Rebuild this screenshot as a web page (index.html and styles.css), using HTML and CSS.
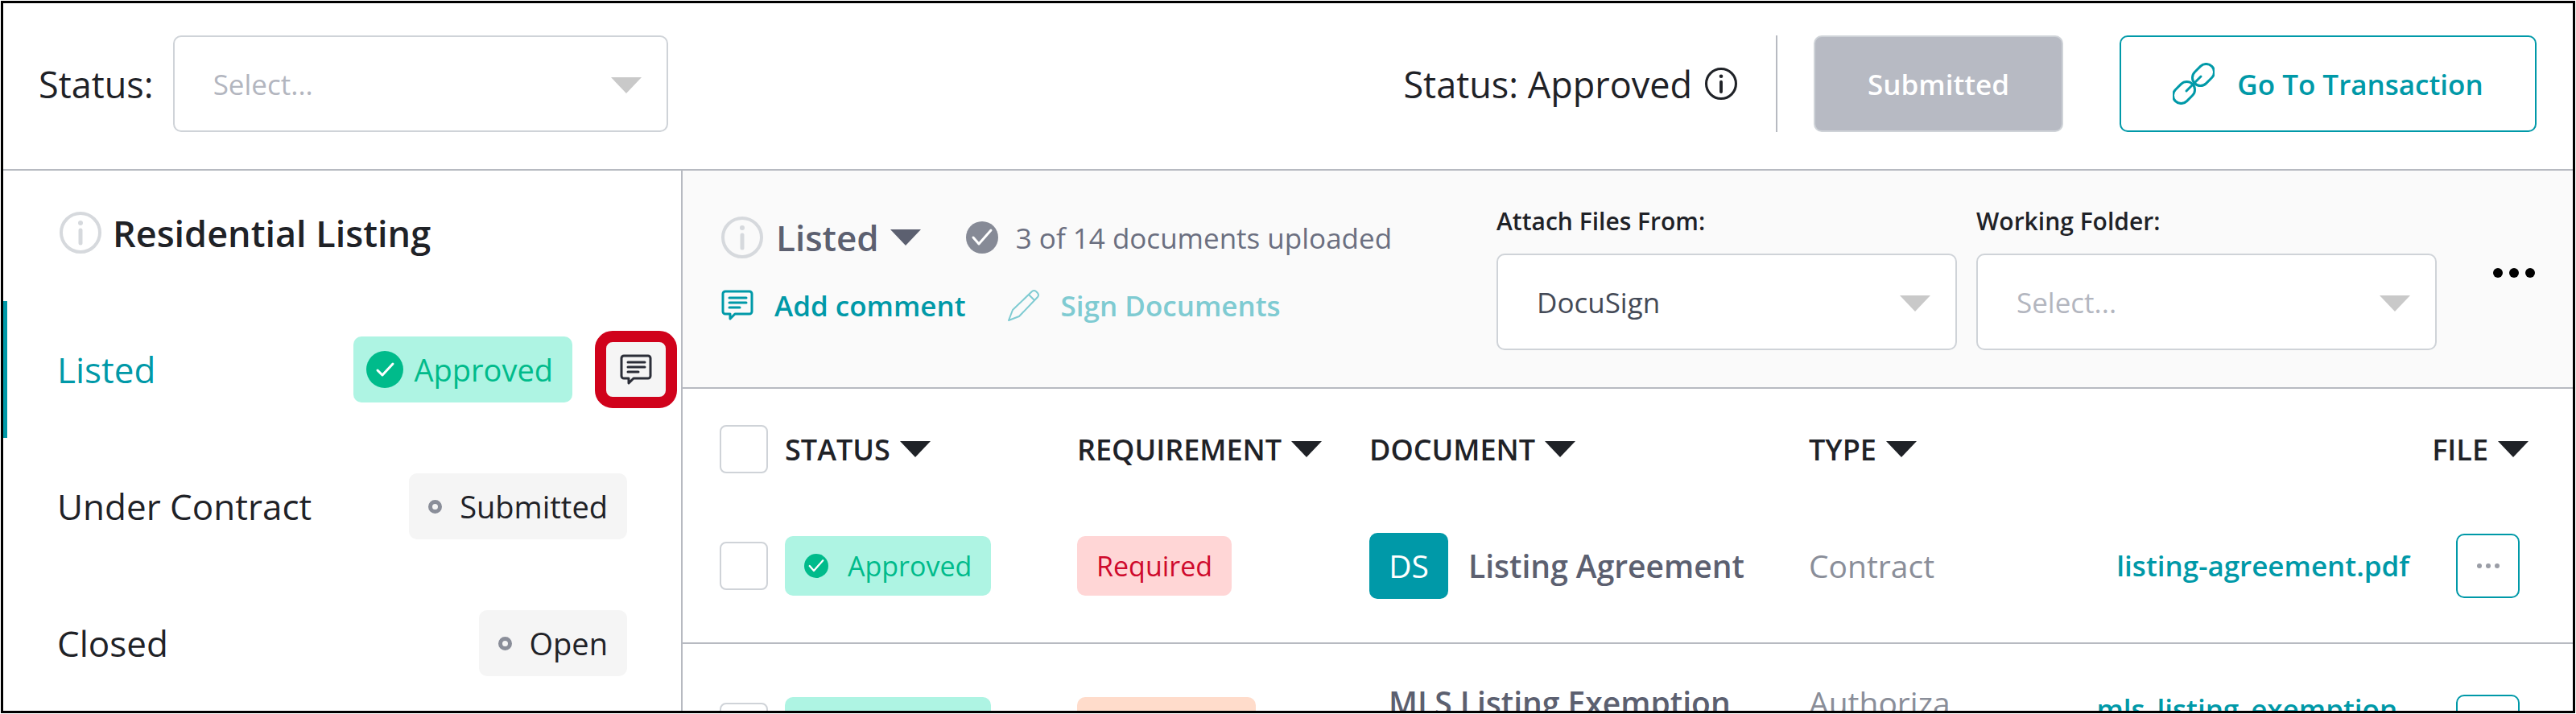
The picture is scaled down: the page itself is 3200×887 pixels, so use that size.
FILE: index.html
```
<!doctype html>
<html lang="en">
<head>
<meta charset="UTF-8">
<meta name="viewport" content="width=device-width, initial-scale=1">
<title>Residential Listing</title>
<link rel="stylesheet" href="styles.css">
</head>
<body>

<!-- shared icons -->
<svg class="sprite" aria-hidden="true">
  <symbol id="info" viewBox="0 0 52 52">
    <circle cx="26" cy="26" r="24" fill="none" stroke="currentColor" stroke-width="4"/>
    <circle cx="26" cy="14" r="3" fill="currentColor"/>
    <path d="M26 23v16" stroke="currentColor" stroke-width="5" stroke-linecap="round"/>
  </symbol>
  <symbol id="check" viewBox="0 0 40 40">
    <circle cx="20" cy="20" r="20" fill="currentColor"/>
    <path d="M9 20l7 8 15-17" fill="none" stroke="#fff" stroke-width="3" stroke-linecap="round" stroke-linejoin="round"/>
  </symbol>
  <symbol id="check-small" viewBox="0 0 46 46">
    <circle cx="23" cy="23" r="23" fill="currentColor"/>
    <path d="M14 24l6 6 13-14" fill="none" stroke="#fff" stroke-width="3" stroke-linecap="round" stroke-linejoin="round"/>
  </symbol>
  <symbol id="comment" viewBox="0 0 40 38">
    <path d="M5 2h30a3 3 0 0 1 3 3v22a3 3 0 0 1-3 3H17l-6 6v-6H5a3 3 0 0 1-3-3V5a3 3 0 0 1 3-3z" fill="none" stroke="currentColor" stroke-width="3" stroke-linejoin="round"/>
    <path d="M10 10h21M10 16h21M10 22h13" fill="none" stroke="currentColor" stroke-width="3" stroke-linecap="round"/>
  </symbol>
  <symbol id="pencil" viewBox="0 0 40 40">
    <path d="M1 39l5-13L30 3a4 4 0 0 1 5 0l2 2a4 4 0 0 1 0 5L14 34zM26 7l7 7" fill="none" stroke="currentColor" stroke-width="2" stroke-linejoin="round"/>
  </symbol>
  <symbol id="chain" viewBox="0 0 52 52">
    <g fill="none" stroke="currentColor" stroke-width="3" stroke-linecap="round">
      <rect x="23" y="5" width="30" height="20" rx="10" transform="rotate(-45 38 15)"/>
      <rect x="-1" y="27" width="30" height="20" rx="10" transform="rotate(-45 14 37)"/>
      <path d="M17 35l18-18"/>
    </g>
  </symbol>
</svg>

<div class="frame">

  <header class="topbar">
    <label class="topbar-label" for="status">Status:</label>
    <div class="select topbar-select">
      <select id="status" class="placeholder">
        <option>Select...</option>
      </select>
    </div>
    <div class="topbar-status">
      <span>Status: Approved</span>
      <svg class="icon-40"><use href="#info"/></svg>
    </div>
    <button class="btn btn-submitted" type="button" disabled>Submitted</button>
    <button class="btn btn-transaction" type="button">
      <svg class="icon-52"><use href="#chain"/></svg>
      Go To Transaction
    </button>
  </header>

  <div class="main">

    <nav class="sidebar">
      <h2 class="sidebar-title">
        <svg class="icon-52 muted"><use href="#info"/></svg>
        Residential Listing
      </h2>
      <div class="stage active">
        <a href="#listed">Listed</a>
        <span class="tag tag-approved">
          <svg class="icon-46"><use href="#check-small"/></svg>
          Approved
        </span>
        <button class="comment-btn" type="button" aria-label="Comments">
          <svg class="icon-40"><use href="#comment"/></svg>
        </button>
      </div>
      <div class="stage">
        <a href="#contract">Under Contract</a>
        <span class="tag"><i class="ring"></i>Submitted</span>
      </div>
      <div class="stage">
        <a href="#closed">Closed</a>
        <span class="tag"><i class="ring"></i>Open</span>
      </div>
    </nav>

    <section class="content">

      <div class="toolbar">
        <div class="toolbar-info">
          <div class="toolbar-row">
            <svg class="icon-52 muted"><use href="#info"/></svg>
            <button class="stage-menu" type="button">Listed <i class="caret"></i></button>
            <svg class="icon-40 uploaded-icon"><use href="#check"/></svg>
            <span class="uploaded">3 of 14 documents uploaded</span>
          </div>
          <div class="toolbar-row">
            <a class="action" href="#comment-form">
              <svg class="icon-40"><use href="#comment"/></svg>
              Add comment
            </a>
            <a class="action disabled" href="#sign">
              <svg class="icon-40"><use href="#pencil"/></svg>
              Sign Documents
            </a>
          </div>
        </div>
        <div class="field">
          <label for="attach">Attach Files From:</label>
          <div class="select">
            <select id="attach">
              <option>DocuSign</option>
            </select>
          </div>
        </div>
        <div class="field">
          <label for="folder">Working Folder:</label>
          <div class="select">
            <select id="folder" class="placeholder">
              <option>Select...</option>
            </select>
          </div>
        </div>
        <button class="more" type="button" aria-label="More"><i></i><i></i><i></i></button>
      </div>

      <table class="docs">
        <colgroup>
          <col class="col-check">
          <col class="col-status">
          <col class="col-status">
          <col class="col-document">
          <col class="col-type">
          <col>
        </colgroup>
        <thead>
          <tr>
            <th><input type="checkbox" aria-label="Select all"></th>
            <th><button class="sort" type="button">STATUS <i class="caret"></i></button></th>
            <th><button class="sort" type="button">REQUIREMENT <i class="caret"></i></button></th>
            <th><button class="sort" type="button">DOCUMENT <i class="caret"></i></button></th>
            <th><button class="sort" type="button">TYPE <i class="caret"></i></button></th>
            <th class="file-head"><button class="sort" type="button">FILE <i class="caret"></i></button></th>
          </tr>
        </thead>
        <tbody>
          <tr>
            <td><input type="checkbox" aria-label="Select Listing Agreement"></td>
            <td><span class="pill pill-approved"><svg class="icon-30"><use href="#check"/></svg>Approved</span></td>
            <td><span class="pill pill-required">Required</span></td>
            <td><div class="doc"><span class="ds">DS</span><span>Listing Agreement</span></div></td>
            <td class="type">Contract</td>
            <td>
              <div class="file">
                <a href="#listing-agreement">listing-agreement.pdf</a>
                <button class="file-more" type="button" aria-label="File options"><i></i><i></i><i></i></button>
              </div>
            </td>
          </tr>
          <tr>
            <td><input type="checkbox" aria-label="Select MLS Listing Exemption"></td>
            <td><span class="pill pill-approved"><svg class="icon-30"><use href="#check"/></svg>Approved</span></td>
            <td><span class="pill pill-conditional">If Required</span></td>
            <td><div class="doc doc-plain"><span>MLS Listing Exemption<br>Form</span></div></td>
            <td class="type">Authoriza<br>tion</td>
            <td>
              <div class="file">
                <a href="#mls-listing-exemption">mls_listing_exemption_<br>form.pdf</a>
                <button class="file-more" type="button" aria-label="File options"><i></i><i></i><i></i></button>
              </div>
            </td>
          </tr>
        </tbody>
      </table>

    </section>
  </div>
</div>

</body>
</html>
```
FILE: styles.css
```
* {
  box-sizing: border-box;
}

body {
  margin: 0;
  padding: 1px;
  background: #fff;
  color: #1f2227;
  font-family: "Open Sans", "Noto Sans", sans-serif;
  font-size: 35px;
}

button,
select {
  font: inherit;
  color: inherit;
}

button {
  margin: 0;
  padding: 0;
  border: 0;
  background: none;
}

a {
  color: inherit;
  text-decoration: none;
}

svg {
  display: block;
  flex: none;
}

.sprite {
  position: absolute;
  width: 0;
  height: 0;
}

.frame {
  display: flex;
  flex-direction: column;
  height: calc(100vh - 2px);
  overflow: hidden;
  border: 3px solid #000;
}

/* icons */
.icon-30 { width: 30px; height: 30px; }
.icon-40 { width: 40px; height: 40px; }
.icon-46 { width: 46px; height: 46px; }
.icon-52 { width: 52px; height: 52px; }

.muted {
  color: #d6d9dd;
}

.caret {
  display: inline-block;
  border: 19px solid transparent;
  border-top: 20px solid currentColor;
  border-bottom: 0;
}

/* select boxes */
.select {
  position: relative;
}

.select select {
  display: block;
  width: 100%;
  height: 120px;
  padding: 0 48px;
  border: 2px solid #cfd3d8;
  border-radius: 10px;
  background: #fff;
  color: #444a57;
  appearance: none;
}

.select select.placeholder {
  color: #b3b6bf;
}

.select::after {
  content: "";
  position: absolute;
  right: 33px;
  top: 52px;
  border: 19px solid transparent;
  border-top: 20px solid #c9c9c9;
  border-bottom: 0;
  pointer-events: none;
}

/* top bar */
.topbar {
  display: flex;
  flex: none;
  align-items: center;
  padding: 40px 45px 46px 44px;
  border-bottom: 2px solid #b7bac1;
}

.topbar-label,
.topbar-status {
  font-size: 45px;
}

.topbar-select {
  width: 615px;
  margin-left: 24px;
}

.topbar-status {
  display: flex;
  align-items: center;
  gap: 16px;
  height: 120px;
  margin-left: auto;
  margin-right: 45px;
  padding-right: 48px;
  border-right: 2px solid #b7bac1;
}

.btn {
  display: flex;
  align-items: center;
  justify-content: center;
  height: 120px;
  border-radius: 10px;
  font-weight: 600;
}

.btn-submitted {
  width: 310px;
  margin-right: 70px;
  border: 2px solid #cfd3d8;
  background: #b7bac3;
  color: #fff;
}

.btn-transaction {
  width: 518px;
  gap: 28px;
  border: 2px solid #0099a8;
  color: #0099a8;
}

.main {
  display: flex;
  flex: 1;
  min-height: 0;
}

/* sidebar */
.sidebar {
  flex: none;
  width: 844px;
  border-right: 2px solid #b7bac1;
}

.sidebar-title {
  display: flex;
  align-items: center;
  gap: 14px;
  height: 162px;
  margin: 0;
  padding: 0 70px 8px;
  font-size: 45px;
  font-weight: 600;
}

.stage {
  display: flex;
  align-items: center;
  height: 170px;
  padding: 0 67px 0 62px;
  border-left: 5px solid transparent;
  font-size: 44px;
}

.stage.active {
  padding-right: 5px;
  border-left-color: #0099a8;
}

.stage.active a {
  color: #0099a8;
}

.tag {
  display: flex;
  align-items: center;
  height: 82px;
  margin-left: auto;
  padding: 0 24px;
  border-radius: 10px;
  background: #f5f5f5;
  font-size: 38px;
}

.tag-approved {
  gap: 14px;
  padding: 0 24px 0 16px;
  background: #aef4e3;
  color: #00bb8b;
}

.ring {
  width: 17px;
  height: 17px;
  margin-right: 22px;
  border: 5px solid #8a8e99;
  border-radius: 50%;
}

.comment-btn {
  display: flex;
  align-items: center;
  justify-content: center;
  width: 102px;
  height: 96px;
  margin-left: 28px;
  border: 14px solid #d0021b;
  border-radius: 22px;
  background: #f5f5f5;
  color: #2b2e38;
}

/* toolbar */
.content {
  flex: 1;
  min-width: 0;
}

.toolbar {
  display: flex;
  align-items: flex-start;
  gap: 24px;
  padding: 43px 47px 46px 48px;
  border-bottom: 2px solid #b7bac1;
  background: #fafafa;
}

.toolbar-info {
  display: flex;
  flex-direction: column;
  gap: 24px;
  margin-right: auto;
  padding-top: 10px;
}

.toolbar-row {
  display: flex;
  align-items: center;
  height: 60px;
}

.stage-menu {
  display: flex;
  align-items: center;
  gap: 14px;
  margin-left: 16px;
  color: #5c6070;
  font-size: 44px;
  font-weight: 600;
}

.uploaded-icon {
  margin-left: 56px;
  color: #868a96;
}

.uploaded {
  margin-left: 22px;
  color: #6b6f80;
}

.action {
  display: flex;
  align-items: center;
  gap: 26px;
  margin-right: 52px;
  color: #0099a8;
  font-weight: 600;
}

.action.disabled {
  color: #7fcbd2;
}

.field {
  width: 572px;
}

.field label {
  display: block;
  margin-bottom: 20px;
  font-size: 30px;
  font-weight: 600;
  line-height: 40px;
}

.more {
  display: flex;
  gap: 8px;
  margin: 78px 0 0 46px;
}

.more i {
  width: 12px;
  height: 12px;
  border-radius: 50%;
  background: #000;
}

/* documents table */
.docs {
  width: 100%;
  border-collapse: collapse;
  table-layout: fixed;
}

.col-check { width: 127px; }
.col-status { width: 363px; }
.col-document { width: 546px; }
.col-type { width: 13%; }

.docs th {
  padding: 45px 0 20px;
  text-align: left;
}

.docs td {
  height: 191px;
  padding: 43px 0;
  border-bottom: 2px solid #b7bac1;
}

.docs input {
  display: block;
  width: 60px;
  height: 60px;
  margin: 0 0 0 46px;
  border: 2px solid #cfd3d8;
  border-radius: 8px;
  background: #fff;
  appearance: none;
}

.sort {
  display: flex;
  align-items: center;
  gap: 12px;
  font-size: 36px;
  font-weight: 600;
}

.docs .file-head {
  padding-right: 55px;
}

.file-head .sort {
  margin-left: auto;
}

.pill {
  display: inline-flex;
  align-items: center;
  height: 74px;
  padding: 0 24px;
  border-radius: 10px;
  font-size: 34px;
}

.pill-approved {
  gap: 24px;
  background: #aef4e3;
  color: #00bb8b;
}

.pill-required {
  background: #ffd6d6;
  color: #cf0a2c;
}

.pill-conditional {
  background: #ffdccb;
  color: #c2410c;
}

.doc {
  display: flex;
  align-items: center;
  gap: 25px;
  color: #5c6070;
  font-size: 39px;
  font-weight: 600;
  line-height: 60px;
}

.doc-plain {
  padding-left: 24px;
}

.ds {
  width: 98px;
  border-radius: 10px;
  background: #0099a8;
  color: #fff;
  font-weight: 400;
  line-height: 82px;
  text-align: center;
}

.type {
  color: #8a8e99;
  font-size: 39px;
  line-height: 60px;
}

.file {
  display: flex;
  align-items: center;
  justify-content: flex-end;
  gap: 58px;
  padding-right: 66px;
}

.file a {
  color: #0099a8;
  font-weight: 600;
  line-height: 44px;
  text-align: right;
}

.file-more {
  display: flex;
  align-items: center;
  justify-content: center;
  gap: 5px;
  width: 79px;
  height: 80px;
  border: 2px solid #0099a8;
  border-radius: 10px;
}

.file-more i {
  width: 6px;
  height: 6px;
  border-radius: 50%;
  background: #9a9da6;
}
```
